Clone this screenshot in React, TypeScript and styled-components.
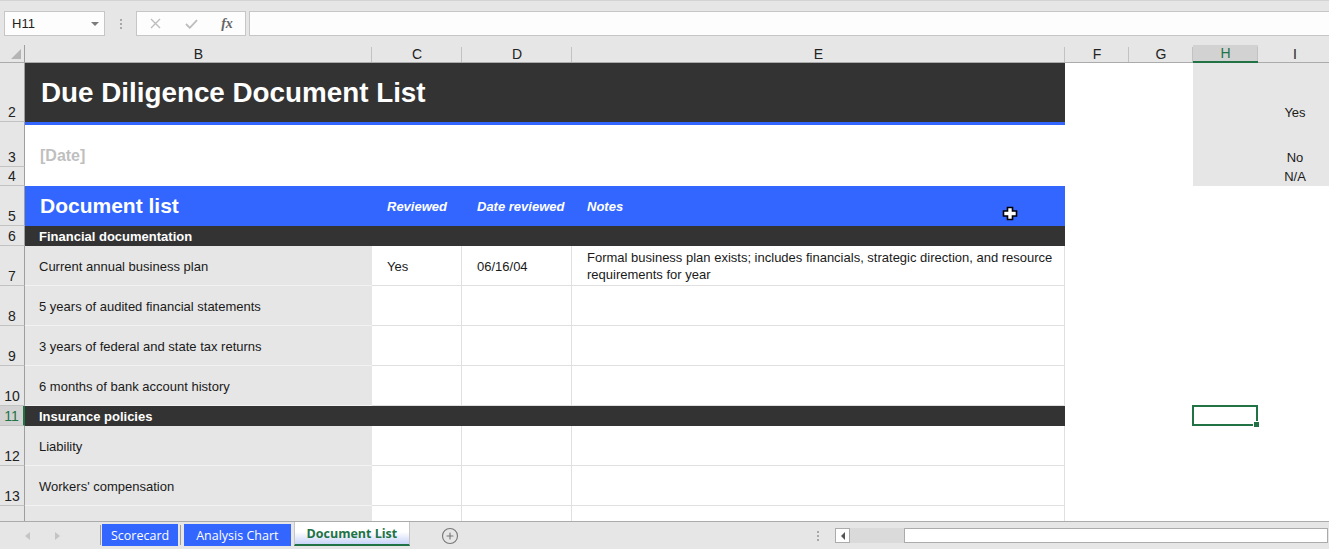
import React from "react";
import styled, { createGlobalStyle, css } from "styled-components";
import { CirclePlus } from "lucide-react";

const GREEN = "#217346";
const BLUE = "#3366ff";
const DARK = "#333333";
const CHROME = "#e6e6e6";

const GlobalStyle = createGlobalStyle`
  html, body {
    margin: 0;
    padding: 0;
    overflow: hidden;
    background: #fff;
  }
  body {
    font-family: "Liberation Sans", Arial, sans-serif;
  }
`;

const Window = styled.div`
  display: flex;
  flex-direction: column;
  width: 1329px;
  height: 549px;
  overflow: hidden;
  background: ${CHROME};
`;

/* ---------- formula bar ---------- */

const FormulaBar = styled.div`
  display: flex;
  align-items: flex-start;
  box-sizing: border-box;
  height: 45px;
  padding: 10px 0 0 4px;
  border-top: 1px solid #d4d4d4;
  background: ${CHROME};
`;

const NameBox = styled.div`
  display: flex;
  align-items: center;
  justify-content: space-between;
  box-sizing: border-box;
  width: 101px;
  height: 25px;
  padding: 0 5px 0 7px;
  border: 1px solid #c6c6c6;
  background: #fdfdfd;
  color: #222;
  font-size: 13px;
`;

const Caret = styled.span`
  width: 0;
  height: 0;
  border-left: 4px solid transparent;
  border-right: 4px solid transparent;
  border-top: 4px solid #7b7b7b;
`;

const Grip = styled.div`
  display: flex;
  flex-direction: column;
  align-items: center;
  justify-content: center;
  gap: 2px;
  width: 31px;
  height: 25px;

  span {
    width: 2px;
    height: 2px;
    background: #a8a8a8;
  }
`;

const FxGroup = styled.div`
  display: grid;
  grid-template-columns: repeat(3, 36px);
  box-sizing: border-box;
  width: 110px;
  height: 25px;
  border: 1px solid #c6c6c6;
  background: #fdfdfd;
`;

const FxSlot = styled.div`
  display: flex;
  align-items: center;
  justify-content: center;
`;

const FxText = styled.span`
  color: #666;
  font-family: "Liberation Serif", "Times New Roman", serif;
  font-size: 14px;
  font-style: italic;
  font-weight: bold;
`;

const FormulaInput = styled.div`
  flex: 1;
  box-sizing: border-box;
  height: 25px;
  margin-left: 3px;
  border: 1px solid #c6c6c6;
  border-right: none;
  background: #fdfdfd;
`;

/* ---------- sheet grid ---------- */

const Sheet = styled.div`
  position: relative;
  display: grid;
  grid-template-columns: 25px 347px 90px 110px 493px 64px 64px 65px 74px;
  grid-template-rows: 18px 59px 45px 19px 40px 20px repeat(4, 40px) 20px repeat(3, 40px);
  height: 476px;
  overflow: hidden;
  background: #fff;
`;

const Corner = styled.div`
  display: flex;
  align-items: flex-end;
  justify-content: flex-end;
  box-sizing: border-box;
  padding: 0 3px 3px 0;
  border-right: 1px solid #9e9e9e;
  border-bottom: 1px solid #ababab;
  background: ${CHROME};
`;

const ColHead = styled.div<{ $active?: boolean }>`
  position: relative;
  display: flex;
  align-items: center;
  justify-content: center;
  box-sizing: border-box;
  border-bottom: 1px solid #ababab;
  background: ${CHROME};
  color: #222;
  font-size: 14px;

  &::after {
    content: "";
    position: absolute;
    top: 2px;
    right: 0;
    bottom: 0;
    width: 1px;
    background: #c2c2c2;
  }

  ${p =>
    p.$active &&
    css`
      border-bottom: 2px solid ${GREEN};
      background: #d2d2d2;
      color: ${GREEN};
    `}
`;

const RowHead = styled.div<{ $active?: boolean }>`
  display: flex;
  align-items: flex-end;
  justify-content: center;
  box-sizing: border-box;
  padding-bottom: 1px;
  border-right: 1px solid #9e9e9e;
  border-bottom: 1px solid #c2c2c2;
  background: ${CHROME};
  color: #222;
  font-size: 14px;

  ${p =>
    p.$active &&
    css`
      border-right: 2px solid ${GREEN};
      background: #d2d2d2;
      color: ${GREEN};
    `}
`;

const TitleCell = styled.div`
  display: flex;
  align-items: center;
  grid-column: span 4;
  padding-left: 16px;
  background: ${DARK};
  color: #fff;
  font-size: 27.8px;
  font-weight: bold;
`;

const DateCell = styled.div`
  display: flex;
  align-items: flex-end;
  grid-column: span 4;
  box-sizing: border-box;
  padding: 0 0 2px 15px;
  border-top: 3px solid ${BLUE};
  color: #bfbfbf;
  font-size: 16px;
  font-weight: bold;
`;

const Wide = styled.div`
  grid-column: span 4;
`;

const BandCell = styled.div<{ $lead?: boolean }>`
  display: flex;
  align-items: center;
  padding-left: 15px;
  background: ${BLUE};
  color: #fff;
  font-size: 13px;
  font-style: italic;
  font-weight: bold;

  ${p =>
    p.$lead &&
    css`
      font-size: 21px;
      font-style: normal;
    `}
`;

const SectionCell = styled.div`
  display: flex;
  align-items: center;
  grid-column: span 4;
  padding-left: 14px;
  background: ${DARK};
  color: #fff;
  font-size: 13px;
  font-weight: bold;
`;

const ItemCell = styled.div`
  display: flex;
  align-items: center;
  box-sizing: border-box;
  padding: 1px 0 0 14px;
  border-bottom: 1px solid #f2f2f2;
  background: ${CHROME};
  color: #1a1a1a;
  font-size: 13px;
`;

const DataCell = styled.div`
  display: flex;
  align-items: center;
  box-sizing: border-box;
  padding: 1px 6px 0 15px;
  border-right: 1px solid #e0e0e0;
  border-bottom: 1px solid #e0e0e0;
  color: #1a1a1a;
  font-size: 13px;
  line-height: 17px;
`;

const Empty = styled.div``;

const SideCell = styled.div`
  display: flex;
  align-items: flex-end;
  justify-content: center;
  padding-bottom: 2px;
  background: ${CHROME};
  color: #1a1a1a;
  font-size: 13px;
`;

const ActiveCell = styled.div`
  position: relative;
  z-index: 2;
  box-sizing: border-box;
  margin: -1px 0 0 -1px;
  border: 2px solid ${GREEN};

  &::after {
    content: "";
    position: absolute;
    right: -4px;
    bottom: -4px;
    width: 5px;
    height: 5px;
    border: 1px solid #fff;
    background: ${GREEN};
  }
`;

const Pointer = styled.svg`
  position: absolute;
  top: 161px;
  left: 1002px;
  z-index: 3;
`;

/* ---------- sheet tabs ---------- */

const TabBar = styled.div`
  display: flex;
  align-items: stretch;
  box-sizing: border-box;
  height: 28px;
  border-top: 1px solid #ababab;
  background: ${CHROME};
`;

const NavArea = styled.div`
  display: flex;
  align-items: center;
  gap: 25px;
  box-sizing: border-box;
  width: 100px;
  padding-left: 25px;
`;

const NavArrow = styled.span<{ $dir: "left" | "right" }>`
  width: 0;
  height: 0;
  border-top: 4px solid transparent;
  border-bottom: 4px solid transparent;
  ${p =>
    p.$dir === "left"
      ? css`border-right: 5px solid #c4c4c4;`
      : css`border-left: 5px solid #c4c4c4;`}
`;

const TabDivider = styled.div<{ $line?: boolean }>`
  position: relative;
  width: ${p => (p.$line ? 6 : 3)}px;

  &::after {
    content: "";
    display: ${p => (p.$line ? "block" : "none")};
    position: absolute;
    top: 3px;
    bottom: 4px;
    left: 2px;
    width: 1px;
    background: #9e9e9e;
  }
`;

const LeadDivider = styled.div`
  width: 1px;
  margin: 3px 1px 4px 0;
  background: #9e9e9e;
`;

const Tab = styled.div<{ $active?: boolean; $pad?: number }>`
  display: flex;
  align-items: center;
  justify-content: center;
  box-sizing: border-box;
  height: 22px;
  margin-top: 2px;
  padding: 0 ${p => p.$pad ?? 12}px;
  background: ${BLUE};
  color: #fff;
  font-family: "Open Sans", "Noto Sans", sans-serif;
  font-size: 12.5px;
  white-space: nowrap;

  ${p =>
    p.$active &&
    css`
      height: 24px;
      margin-top: 0;
      border: 1px solid #c6c6c6;
      border-top: none;
      border-bottom: 2px solid ${GREEN};
      background: linear-gradient(#ffffff 45%, #c9d4f8);
      color: ${GREEN};
      font-weight: bold;
    `}
`;

const AddSheet = styled.div`
  display: flex;
  align-items: center;
  margin-left: 31px;
  color: #777;
`;

const ScrollArea = styled.div`
  display: flex;
  align-items: center;
  margin-left: auto;
  margin-right: 1px;
`;

const ScrollGrip = styled(Grip)`
  width: 15px;
  margin-right: 10px;
`;

const ScrollButton = styled.div`
  display: flex;
  align-items: center;
  justify-content: center;
  box-sizing: border-box;
  width: 15px;
  height: 15px;
  border: 1px solid #ababab;
  background: #fff;

  span {
    width: 0;
    height: 0;
    border-top: 4px solid transparent;
    border-bottom: 4px solid transparent;
    border-right: 4px solid #555;
  }
`;

const ScrollTrack = styled.div`
  width: 54px;
  height: 15px;
  background: #dadada;
`;

const ScrollThumb = styled.div`
  box-sizing: border-box;
  width: 424px;
  height: 15px;
  border: 1px solid #ababab;
  background: #fff;
`;

/* ---------- data ---------- */

type Item = { item: string; reviewed?: string; date?: string; notes?: string };

const financial: Item[] = [
  {
    item: "Current annual business plan",
    reviewed: "Yes",
    date: "06/16/04",
    notes:
      "Formal business plan exists; includes financials, strategic direction, and resource requirements for year",
  },
  { item: "5 years of audited financial statements" },
  { item: "3 years of federal and state tax returns" },
  { item: "6 months of bank account history" },
];

const insurance: Item[] = [{ item: "Liability" }, { item: "Workers' compensation" }, { item: "" }];

const columns = ["B", "C", "D", "E", "F", "G", "H", "I"];

// rows past this one are below the fold, their number never shows
const LAST_VISIBLE_ROW = 13;

const blanks = (key: string, n = 4) =>
  Array.from({ length: n }, (_, i) => <Empty key={`${key}-${i}`} />);

const lookup = (key: string, value: string) => [
  ...blanks(key, 2),
  <SideCell key={`${key}-h`} />,
  <SideCell key={`${key}-i`}>{value}</SideCell>,
];

const itemRow = (row: number, d: Item) => [
  <RowHead key={`r${row}`}>{row <= LAST_VISIBLE_ROW ? row : null}</RowHead>,
  <ItemCell key={`b${row}`}>{d.item}</ItemCell>,
  <DataCell key={`c${row}`}>{d.reviewed}</DataCell>,
  <DataCell key={`d${row}`}>{d.date}</DataCell>,
  <DataCell key={`e${row}`}>{d.notes}</DataCell>,
  ...blanks(`f${row}`),
];

const App = () => (
  <>
    <GlobalStyle />
    <Window>
      <FormulaBar>
        <NameBox>
          H11
          <Caret />
        </NameBox>
        <Grip>
          <span />
          <span />
          <span />
        </Grip>
        <FxGroup>
          <FxSlot>
            <svg width="11" height="11" viewBox="0 0 11 11">
              <path d="M1 1 L10 10 M10 1 L1 10" stroke="#bdbdbd" strokeWidth="1.4" fill="none" />
            </svg>
          </FxSlot>
          <FxSlot>
            <svg width="13" height="10" viewBox="0 0 13 10">
              <path d="M1 5 L4.8 8.8 L12 1.2" stroke="#bdbdbd" strokeWidth="1.8" fill="none" />
            </svg>
          </FxSlot>
          <FxSlot>
            <FxText>fx</FxText>
          </FxSlot>
        </FxGroup>
        <FormulaInput />
      </FormulaBar>

      <Sheet>
        <Corner>
          <svg width="10" height="10" viewBox="0 0 10 10">
            <path d="M10 0 L10 10 L0 10 Z" fill="#b4b4b4" />
          </svg>
        </Corner>
        {columns.map(c => (
          <ColHead key={c} $active={c === "H"}>
            {c}
          </ColHead>
        ))}

        <RowHead>2</RowHead>
        <TitleCell>Due Diligence Document List</TitleCell>
        {lookup("r2", "Yes")}

        <RowHead>3</RowHead>
        <DateCell>[Date]</DateCell>
        {lookup("r3", "No")}

        <RowHead>4</RowHead>
        <Wide />
        {lookup("r4", "N/A")}

        <RowHead>5</RowHead>
        <BandCell $lead>Document list</BandCell>
        <BandCell>Reviewed</BandCell>
        <BandCell>Date reviewed</BandCell>
        <BandCell>Notes</BandCell>
        {blanks("r5")}

        <RowHead>6</RowHead>
        <SectionCell>Financial documentation</SectionCell>
        {blanks("r6")}

        {financial.map((d, i) => itemRow(7 + i, d))}

        <RowHead $active>11</RowHead>
        <SectionCell>Insurance policies</SectionCell>
        {blanks("r11", 2)}
        <ActiveCell />
        <Empty />

        {insurance.map((d, i) => itemRow(12 + i, d))}

        <Pointer width="16" height="15" viewBox="0 0 16 15">
          <path
            d="M5.5 1.5 H10.5 V5 H14.5 V10 H10.5 V13.5 H5.5 V10 H1.5 V5 H5.5 Z"
            fill="#fff"
            stroke="#000"
            strokeWidth="1.6"
          />
        </Pointer>
      </Sheet>

      <TabBar>
        <NavArea>
          <NavArrow $dir="left" />
          <NavArrow $dir="right" />
        </NavArea>
        <LeadDivider />
        <Tab $pad={9}>Scorecard</Tab>
        <TabDivider $line />
        <Tab>Analysis Chart</Tab>
        <TabDivider />
        <Tab $active>Document List</Tab>
        <AddSheet>
          <CirclePlus size={18} strokeWidth={1.5} />
        </AddSheet>
        <ScrollArea>
          <ScrollGrip>
            <span />
            <span />
            <span />
          </ScrollGrip>
          <ScrollButton>
            <span />
          </ScrollButton>
          <ScrollTrack />
          <ScrollThumb />
        </ScrollArea>
      </TabBar>
    </Window>
  </>
);

export default App;
